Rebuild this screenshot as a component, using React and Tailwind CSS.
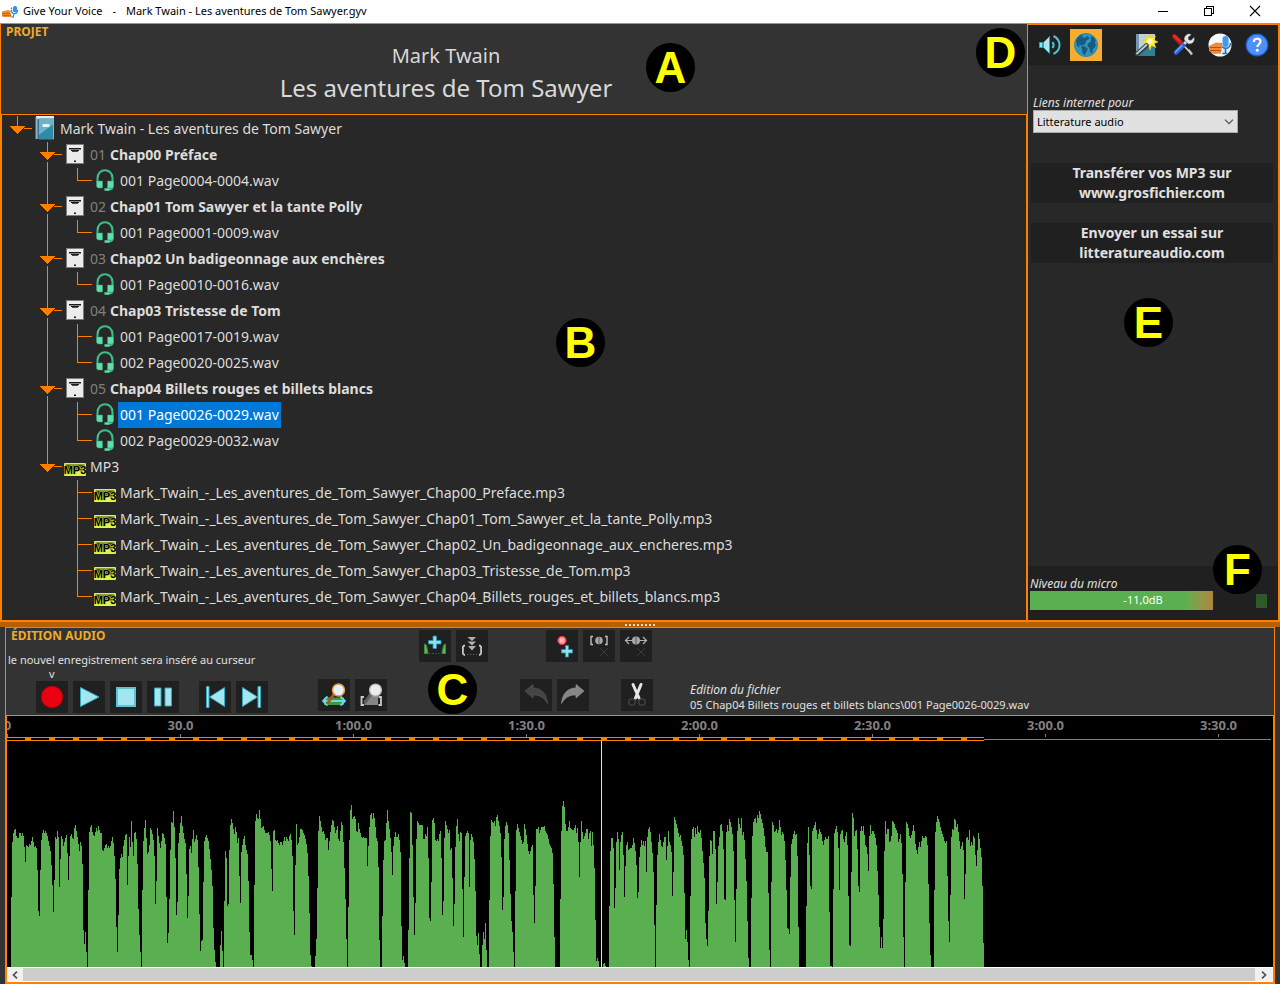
import React from "react";

const EMPTY = 531;

const WAVE_PARTS = [
  {
    shift: "translate(0 0)",
    points:
      "34,531 34,357 37,160 40,132 46,112 50,140 55,146 58,128 62,128 65,140 69,122 73,160 76,228 79,166 85,172 89,160 92,165 98,140 103,172 109,165 112,215 115,353 118,404 121,258 124,155 127,130 131,120 134,132 137,122 143,140 148,165 152,185 157,265 160,383 163,297 166,138 169,150 175,105 178,308 184,138 187,143 190,170 194,153 201,132 205,282 208,212 211,140 214,130 217,143 220,152 223,115 226,102 229,120 235,155 238,188 241,153 245,170 248,232 250,407 253,473 256,415 259,475 262,531 264,531 265,337 268,130 274,100 278,130 283,140 287,125 289,110 292,125 296,106 300,128 305,130 307,178 310,186 315,168 320,163 323,175 326,165 330,178 334,155 338,138 342,170 346,242 349,390 352,503 355,405 358,245 361,205 365,190 367,207 371,165 376,135 380,132 382,299 388,130 391,190 394,82 398,165 400,210 404,118 409,135 412,195 415,342 419,447 422,492 424,531 427,531 427,333 430,160 436,82 440,150 443,200 448,175 451,112 457,128 463,165 466,347 469,310 472,108 477,150 482,175 487,130 492,135 497,165 500,347 502,461 505,445 508,357 511,200 514,95 517,108 520,55 523,98 526,165 529,375 532,375 535,165 541,105 544,73 547,105 552,140 558,165 562,392 565,347 568,180 571,160 574,195 580,112 584,160 590,132 594,160 598,347 601,491 604,447 607,482 610,305 613,155 619,132 626,155 631,200 637,265 640,402 643,475 648,531 659,531 661,475 664,411 667,472 670,531 671,531 673,365 676,185 679,172 682,350 686,342 688,195 691,108 694,85 698,100 703,136 708,102 712,165 715,124 718,232 721,372 724,190 730,150 733,133 737,168 743,195 746,288 749,450 752,503 755,492 758,515 760,531 763,531 763,327 766,95 770,70 775,95 778,55 782,90 785,118 790,106 795,128 802,130 807,125 812,155 814,215 817,341 820,125 823,115 827,155 833,148 838,168 843,152 848,165 853,140 857,155 860,138 865,155 871,127 877,168 880,340 883,476 886,255 889,90 893,175 898,145 902,112 908,122 915,140 920,165 924,205 926,275 929,385 932,515 935,531 945,531 947,490 950,440 952,325 956,95 959,75 963,105 968,127 972,120 976,152 982,138 986,185 990,135 997,88 1001,93 1006,130 1010,118 1013,105 1015,145 1018,160 1024,95 1028,106 1031,165 1034,245 1037,340 1040,465 1042,531 1045,531 1045,390 1048,168 1051,65 1054,37 1057,88 1063,75 1067,88 1071,145 1075,95 1080,125 1086,145 1092,140 1096,148 1099,122 1102,238 1105,180 1110,80 1115,67 1118,90 1121,65 1125,95 1130,150 1133,155 1136,245 1138,435 1141,531 1145,531 1147,411 1150,222 1153,152 1157,150 1160,90 1162,52 1165,90 1170,130 1174,165 1177,270 1181,155 1187,122 1191,150 1195,128 1200,160 1203,212 1204,385 1207,515 1210,495 1213,515 1215,531",
  },
  {
    shift: "translate(1200 0)",
    points:
      "24,531 25,462 28,235 31,67 34,55 37,140 40,293 43,448 46,378 49,160 52,93 57,103 64,108 67,97 70,145 73,152 76,127 79,147 82,100 85,165 88,378 91,410 94,316 97,92 100,82 104,100 106,150 109,153 112,145 115,158 121,112 124,168 127,377 130,370 133,155 136,92 142,115 146,130 148,106 151,183 154,160 157,230 160,413 163,377 166,183 169,115 172,79 175,128 179,155 181,130 184,103 187,258 190,473 193,288 196,140 202,122 206,130 208,320 211,155 214,130 220,150 223,192 226,276 229,430 232,476 235,420 238,476 240,531 247,531 247,476 250,420 253,460 256,385 259,460 261,531 267,531 268,370 271,148 274,88 280,102 283,88 286,115 289,85 292,70 295,92 301,120 304,165 307,359 310,357 313,155 316,112 319,94 324,108 327,150 330,265 334,387 337,414 340,475 343,531 345,531 346,342 349,125 352,99 357,120 362,140 367,162 371,155 373,99 379,130 384,175 388,195 391,185 395,168 398,163 400,292 403,417 406,324 409,116 412,118 415,108 418,130 424,112 430,112 433,106 437,124 443,136 448,160 454,172 458,190 461,300 464,465 466,531 480,531 481,370 484,138 487,52 490,30 493,42 496,97 499,124 504,122 508,90 511,112 517,120 522,118 527,105 529,132 533,112 535,130 538,282 541,172 544,88 547,120 550,147 556,132 562,108 565,152 571,112 574,177 577,120 580,155 583,205 586,363 589,515 592,501 596,516 598,531 609,531 610,525 613,516 618,531 627,531 628,384 631,190 634,145 638,145 641,180 643,360 646,324 649,163 652,128 655,124 658,258 661,160 667,118 670,165 673,338 676,240 679,168 682,151 685,180 690,175 697,172 700,142 703,155 709,205 712,324 715,330 718,205 724,148 728,168 731,150 734,170 736,127 739,268 742,148 745,118 748,109 752,127 757,185 760,215 763,378 766,531 768,531 769,375 772,200 778,127 781,148 786,178 790,157 796,130 800,220 805,117 808,152 811,168 814,155 817,328 820,282 823,79 828,95 834,120 838,142 841,132 845,155 850,178 853,276 856,453 859,414 862,447 865,504 868,531 870,531 871,353 874,153 877,120 880,105 884,145 887,108 890,135 893,105 896,130 900,128 900,531",
  },
  {
    shift: "translate(2100 0)",
    points:
      "0,531 0,112 3,125 7,175 10,215 13,237 16,390 19,437 22,486 25,396 28,207 31,151 35,153 38,200 41,109 46,138 49,350 52,300 55,172 58,150 61,105 64,99 67,118 70,145 73,327 77,330 79,130 83,103 86,125 88,85 92,97 97,125 100,160 103,297 106,482 109,336 112,130 115,82 118,97 121,124 124,73 127,137 130,122 133,140 136,198 139,252 142,370 145,500 148,531 152,531 154,363 157,148 160,97 166,79 169,105 172,73 175,88 178,61 182,75 187,97 192,120 196,165 199,190 202,165 205,276 208,460 210,531 212,531 214,316 217,94 222,110 224,132 229,115 232,130 236,120 238,85 241,105 244,138 248,124 253,142 256,198 259,273 262,414 265,408 268,464 271,282 274,165 279,138 283,122 286,136 289,124 292,162 295,366 297,531 318,531 319,387 322,172 325,97 328,180 331,276 334,336 337,124 343,109 346,91 349,112 352,150 358,117 364,130 370,168 376,140 381,150 386,136 388,330 391,528 400,531 400,333 403,130 409,106 415,138 418,336 421,132 427,115 430,147 434,157 439,122 442,138 445,288 448,456 451,510 454,285 457,70 460,73 463,142 469,112 472,155 475,276 478,345 481,128 484,103 487,128 490,103 493,130 497,168 502,175 505,264 508,148 511,97 514,135 518,120 522,125 527,145 530,168 532,232 535,300 538,396 541,482 544,432 547,482 550,430 553,205 556,82 559,137 562,117 565,109 568,158 574,150 577,91 583,100 588,120 592,122 595,156 600,145 603,122 607,220 610,408 612,531 614,531 616,316 619,94 625,108 630,150 637,127 640,103 643,115 646,160 652,195 658,153 661,174 667,138 672,147 677,138 681,142 683,172 685,261 688,381 691,482 693,531 701,531 703,336 706,132 709,100 712,76 718,95 724,122 730,140 736,160 740,153 742,235 745,373 748,480 751,353 754,148 757,115 760,125 763,88 766,85 769,112 772,99 776,130 781,178 785,165 790,145 793,338 796,276 799,145 803,142 805,160 808,109 811,170 814,153 817,170 820,138 823,136 826,187 829,237 832,190 835,127 838,142 841,172 844,187 847,258 850,432 852,531",
  },
];

/* ---------- Icons ---------- */

const AppLogo = () => (
  <svg viewBox="0 0 16 12" className="h-3 w-4" aria-hidden="true">
    <path d="M0 5.500 6 4l3 1-1 2h1v4H1l-1-1z" fill="#f08a2c" />
    <path d="M0 7.500h8M1 9.500h8" stroke="#b65a14" strokeWidth=".8" />
    <rect x="11" y="0" width="4" height="6.500" rx="1.800" fill="#2b93e8" />
    <path d="M9.500 4c0 5 6 5 6 0M12 8l-1 3M9 11h3M9.500 1.500v2" stroke="#1e8ce8" strokeWidth="1.200" fill="none" />
  </svg>
);

const Speaker = () => (
  <svg viewBox="0 0 24 24" className="size-6" aria-hidden="true">
    <path d="M2.500 9.500h3v5h-3z" fill="#8fe3ef" stroke="#2aa5b8" />
    <path d="M6.500 9.500 12.500 3.500v17l-6-6z" fill="#a5e8f2" stroke="#2aa5b8" />
    <path d="M15.500 9c1.500 2 1.500 4 0 6" fill="none" stroke="#4cc4d6" strokeWidth="2" />
    <path d="M16.500 3c8 4 8 14 0 18" fill="none" stroke="#4cc4d6" strokeWidth="2" />
  </svg>
);

const Globe = () => (
  <svg viewBox="0 0 26 26" className="size-[26px]" aria-hidden="true">
    <circle cx="13" cy="13" r="11.500" fill="#2c96bd" />
    <path d="M3 8c1-3 4-5.500 7-6l-1 3 3 1 2-2 3 2-4 3-1 3-3 1.500-3-1 1 3-3-1.500z" fill="#1b5a80" />
    <path d="M8 14l4 .5 3 2.500-1.500 2.500-2 4-2-2.500-.5-3.500z" fill="#1b5a80" />
    <path d="M18 4.500l2.500.5 2.500 4-1.500 1 1.500 3-1.500 3-1.500 1-.5 3.500-2 .5-1-5-2-1.500.5-3 3-2z" fill="#1b5a80" />
    <circle cx="13" cy="13" r="11.500" fill="none" stroke="#2a86a8" />
  </svg>
);

const Wizard = () => (
  <svg viewBox="0 0 24 24" className="size-6" aria-hidden="true">
    <path d="M4 1h17v22H4z" fill="#2f7f97" />
    <path d="M4 1h17v6L6 20H4z" fill="#b9d2dc" />
    <path d="M2 1h3v22H2z" fill="#7396aa" />
    <path d="M16 1l1.500 4 4-2-1.500 4 4 2-4 1.500 2 4-4.500-2L16 17l-1.500-4.500-4.500 1.500 2-4-3.500-2 4-1L11 3l4 2z" fill="#ffef3a" stroke="#f5c411" strokeWidth=".6" />
    <circle cx="16" cy="8.500" r="2.500" fill="#fffde0" />
    <path d="M3 21 12.500 12.500" stroke="#333a40" strokeWidth="4.500" strokeLinecap="round" />
    <path d="M3 20.500 12.500 12" stroke="#bcc8ce" strokeWidth="2" strokeLinecap="round" />
  </svg>
);

const Tools = () => (
  <svg viewBox="0 0 24 24" className="size-6" aria-hidden="true">
    <path d="M9 9 18 18" stroke="#dfe3e6" strokeWidth="1.600" />
    <path d="M17.500 17l3.500 4.500" stroke="#c2c8cc" strokeWidth="2.500" />
    <path d="M3.500 3.500l6 6" stroke="#d01818" strokeWidth="4.600" strokeLinecap="round" />
    <path d="M3 2.500l5.500 5.500" stroke="#f05a5a" strokeWidth="1" strokeLinecap="round" />
    <path d="M16 9.500 13.500 7c-.5-4 3-7 6.500-5.500l-3 3 .5 2.500 2.500.5 3-3c1 4-2 7-6 6z" fill="#e3e7ea" stroke="#9ea6ab" strokeWidth=".5" />
    <path d="M15 9 12 12" stroke="#d5dadd" strokeWidth="3" />
    <path d="M12 12.500 5 19.500" stroke="#2a62d8" strokeWidth="4.600" strokeLinecap="round" />
    <path d="M11 12.500 4.500 19" stroke="#7da6ff" strokeWidth="1.200" strokeLinecap="round" />
  </svg>
);

const Contribute = () => (
  <svg viewBox="0 0 24 24" className="size-6" aria-hidden="true">
    <circle cx="12" cy="12" r="11.500" fill="#f7fafc" />
    <path d="M17 2.500a11.500 11.500 0 0 1-3 20z" fill="#cfe4f5" />
    <rect x="14.500" y="3" width="6" height="11" rx="3" fill="#3f9bea" />
    <path d="M13 10c0 7 9.500 7 9.500 0M17.500 15v5M14.500 20.500h5" stroke="#2470b4" strokeWidth="1.500" fill="none" />
    <path d="M1 13l7-3.500 5 .5 1 2v2l-1 6.500-7 .5-5-3z" fill="#f08a38" />
    <path d="M2 14.500h11M2 17.500h11" stroke="#b5530f" strokeWidth="1.200" />
  </svg>
);

const Help = () => (
  <svg viewBox="0 0 24 24" className="size-6" aria-hidden="true">
    <circle cx="12" cy="12" r="10.800" fill="#4d90fa" stroke="#1f5fd0" strokeWidth="1.200" />
    <path d="M8.800 9c0-4.300 6.700-4.300 6.700-.4 0 2.700-3.200 2.600-3.200 5.400" fill="none" stroke="#fff" strokeWidth="2.200" />
    <circle cx="12.200" cy="17.300" r="1.500" fill="#fff" />
  </svg>
);

const BookIcon = () => (
  <svg viewBox="0 0 20 24" className="h-6 w-5" aria-hidden="true">
    <path d="M0 1h5v22H0z" fill="#3c6f8e" />
    <path d="M1 0h18v3H1z" fill="#dfe9ef" />
    <path d="M4 2.500h15v21H4z" fill="#2d8ca6" />
    <path d="M4 2.500h15v5L4 19z" fill="#6db3c6" />
    <path d="M1 1.500h1.500V23H1zM18 2h1v21h-1z" fill="#8fb3c9" />
    <path d="M7.500 8h7v3h-7z" fill="#e4f3f7" />
  </svg>
);

const ChapterIcon = () => (
  <svg viewBox="0 0 18 20" className="h-5 w-[18px]" aria-hidden="true">
    <path d="M0 0h18v20H0z" fill="#7c7c7c" />
    <path d="M1 1h16v18H1z" fill="#ececec" />
    <path d="M3 4h12v1.500H3zM5 6h8v1H5zM6 7.300h6v.7H6zM8 16.500h2V18H8z" fill="#1a1a1a" />
  </svg>
);

const Headphones = () => (
  <svg viewBox="0 0 18 22" className="h-[22px] w-[18px]" aria-hidden="true">
    <path d="M1.500 13V9.500C1.500-1.500 16.500-1.500 16.500 9.500V18c0 2-1 2.500-5 2.500" fill="none" stroke="#3cc08a" strokeWidth="2" />
    <path d="M.5 12h6v7H3C1 19 .5 18 .5 16.500zM11.500 12h6v5c0 1.500-.5 2-2.500 2h-3.500z" fill="#5fe0aa" stroke="#2f9f74" strokeWidth=".5" />
    <path d="M8.500 19.300h5v2.400h-5z" fill="#5fe0aa" />
  </svg>
);

const Mp3Icon = () => (
  <svg viewBox="0 0 22 13" className="mt-1.5 h-[13px] w-[22px]" aria-hidden="true">
    <rect width="22" height="13" rx="1" fill="#dcf54a" />
    <rect x="1.500" y="1.500" width="19" height="6" fill="#3c4512" />
    <text
      x="11"
      y="11"
      textAnchor="middle"
      fill="#000"
      stroke="#c8e03c"
      strokeWidth="1"
      paintOrder="stroke"
      className="font-['Liberation_Sans_Narrow','Liberation_Sans',sans-serif] text-[11px] font-bold"
    >
      MP3
    </text>
  </svg>
);

/* ---------- Tree ---------- */

function Guide({ kind }) {
  return (
    <svg viewBox="0 0 30 26" className="h-[26px] w-[30px] shrink-0" shapeRendering="crispEdges" fill="#ff8000" aria-hidden="true">
      {kind === "open" && (
        <>
          <path d="M15 0h1v10h-1zM22 12h8v1h-8z" />
          <path d="M8 10h15l-7.500 8z" />
        </>
      )}
      {kind === "openMid" && (
        <>
          <path d="M15 0h1v10h-1zM15 20h1v6h-1zM22 12h8v1h-8z" />
          <path d="M8 10h15l-7.500 8z" />
        </>
      )}
      {kind === "line" && <path d="M15 0h1v26h-1z" />}
      {kind === "mid" && <path d="M15 0h1v26h-1zM15 12h15v1H15z" />}
      {kind === "last" && <path d="M15 0h1v13h-1zM15 12h15v1H15z" />}
    </svg>
  );
}

const ROWS = [
  { guides: ["open"], icon: "book", text: "Mark Twain - Les aventures de Tom Sawyer" },
  { guides: ["none", "openMid"], icon: "chapter", num: "01", text: "Chap00 Préface" },
  { guides: ["none", "line", "last"], icon: "wav", text: "001 Page0004-0004.wav" },
  { guides: ["none", "openMid"], icon: "chapter", num: "02", text: "Chap01 Tom Sawyer et la tante Polly" },
  { guides: ["none", "line", "last"], icon: "wav", text: "001 Page0001-0009.wav" },
  { guides: ["none", "openMid"], icon: "chapter", num: "03", text: "Chap02 Un badigeonnage aux enchères" },
  { guides: ["none", "line", "last"], icon: "wav", text: "001 Page0010-0016.wav" },
  { guides: ["none", "openMid"], icon: "chapter", num: "04", text: "Chap03 Tristesse de Tom" },
  { guides: ["none", "line", "mid"], icon: "wav", text: "001 Page0017-0019.wav" },
  { guides: ["none", "line", "last"], icon: "wav", text: "002 Page0020-0025.wav" },
  { guides: ["none", "openMid"], icon: "chapter", num: "05", text: "Chap04 Billets rouges et billets blancs" },
  { guides: ["none", "line", "mid"], icon: "wav", text: "001 Page0026-0029.wav", selected: true },
  { guides: ["none", "line", "last"], icon: "wav", text: "002 Page0029-0032.wav" },
  { guides: ["none", "open"], icon: "mp3", text: "MP3" },
  { guides: ["none", "none", "mid"], icon: "mp3", text: "Mark_Twain_-_Les_aventures_de_Tom_Sawyer_Chap00_Preface.mp3" },
  { guides: ["none", "none", "mid"], icon: "mp3", text: "Mark_Twain_-_Les_aventures_de_Tom_Sawyer_Chap01_Tom_Sawyer_et_la_tante_Polly.mp3" },
  { guides: ["none", "none", "mid"], icon: "mp3", text: "Mark_Twain_-_Les_aventures_de_Tom_Sawyer_Chap02_Un_badigeonnage_aux_encheres.mp3" },
  { guides: ["none", "none", "mid"], icon: "mp3", text: "Mark_Twain_-_Les_aventures_de_Tom_Sawyer_Chap03_Tristesse_de_Tom.mp3" },
  { guides: ["none", "none", "last"], icon: "mp3", text: "Mark_Twain_-_Les_aventures_de_Tom_Sawyer_Chap04_Billets_rouges_et_billets_blancs.mp3" },
];

const ROW_ICONS = { book: BookIcon, chapter: ChapterIcon, wav: Headphones, mp3: Mp3Icon };

function TreeRow({ row }) {
  const Icon = ROW_ICONS[row.icon];
  return (
    <li
      role="treeitem"
      aria-level={row.guides.length}
      aria-selected={Boolean(row.selected)}
      className="flex h-[26px] items-center whitespace-nowrap text-sm text-[#dcdcdc]"
    >
      {row.guides.map((kind, i) => (
        <Guide key={i} kind={kind} />
      ))}
      <span className="flex w-[26px] shrink-0 items-center justify-center pb-0.5">
        <Icon />
      </span>
      <span className={row.selected ? "flex h-[26px] items-center bg-[#0078d7] px-0.5 text-white" : "flex items-center gap-1 px-0.5"}>
        {row.num && <span className="text-[#808080]">{row.num}</span>}
        <span className={row.num ? "font-bold" : ""}>{row.text}</span>
      </span>
    </li>
  );
}

/* ---------- Small parts ---------- */

function Marker({ letter, className }) {
  return (
    <span
      className={`absolute flex size-[49px] items-center justify-center rounded-full bg-black font-['Liberation_Sans',sans-serif] text-[44px] leading-none font-bold text-[#ffff00] ${className}`}
    >
      {letter}
    </span>
  );
}

function ToolButton({ label, children }) {
  return (
    <button type="button" aria-label={label} className="flex size-8 shrink-0 items-center justify-center bg-[#202020]">
      <svg viewBox="0 0 32 32" className="size-8" aria-hidden="true">
        {children}
      </svg>
    </button>
  );
}

function PanelButton({ label, active, children }) {
  return (
    <button
      type="button"
      aria-label={label}
      className={active ? "flex size-8 shrink-0 items-center justify-center bg-[#f5ae30]" : "flex size-8 shrink-0 items-center justify-center"}
    >
      {children}
    </button>
  );
}

/* ---------- Sections ---------- */

function TitleBar() {
  return (
    <header className="flex h-[23px] items-center bg-white pl-0.5 text-black">
      <AppLogo />
      <h1 className="ml-[5px] flex gap-2.5 text-[11px]">
        <span>Give Your Voice</span>
        <span>-</span>
        <span>Mark Twain - Les aventures de Tom Sawyer.gyv</span>
      </h1>
      <div className="ml-auto flex items-center gap-[34px] pr-[19px] pb-0.5">
        <button type="button" aria-label="Réduire">
          <svg viewBox="0 0 12 12" className="size-3" shapeRendering="crispEdges"><path d="M1 6h10v1H1z" /></svg>
        </button>
        <button type="button" aria-label="Restaurer">
          <svg viewBox="0 0 12 12" className="size-3" shapeRendering="crispEdges">
            <path d="M1.500 3.500h7v7h-7zM3.500 3.500v-2h7v7h-2" fill="none" stroke="#000" />
          </svg>
        </button>
        <button type="button" aria-label="Fermer">
          <svg viewBox="0 0 12 12" className="size-3"><path d="M1 1l10 10M11 1 1 11" stroke="#000" strokeWidth="1.100" /></svg>
        </button>
      </div>
    </header>
  );
}

function ProjectPanel() {
  return (
    <section className="relative flex min-w-0 flex-1 flex-col">
      <div className="relative h-[91px] border-t border-l border-[#ff8000] bg-[#333333]">
        <h2 className="pl-[5px] text-[12px] leading-4 font-bold text-[#f0aa28]">PROJET</h2>
        <div className="flex flex-col items-center pr-[136px] text-[#d8d8d8]">
          <p className="text-[20px] leading-8">Mark Twain</p>
          <p className="text-[24px] leading-8">Les aventures de Tom Sawyer</p>
        </div>
        <Marker letter="A" className="top-[19px] left-[645px]" />
        <Marker letter="D" className="top-1 right-0.5" />
      </div>
      <div className="flex-1 border border-b-2 border-l-2 border-[#ff8000] bg-[#282828] pb-2.5">
        <ul role="tree" aria-label="Projet" className="pt-px">
          {ROWS.map((row) => (
            <TreeRow key={row.text} row={row} />
          ))}
        </ul>
      </div>
      <Marker letter="B" className="top-[295px] left-[556px]" />
    </section>
  );
}

function SidePanel() {
  return (
    <aside className="relative flex w-[253px] shrink-0 flex-col border-2 border-l border-[#ff8000] bg-[#282828] text-[#e0e0e0]">
      <nav aria-label="Outils" className="flex h-10 items-center bg-[#202020] pl-[5px]">
        <PanelButton label="Son"><Speaker /></PanelButton>
        <span className="w-[5px]" />
        <PanelButton label="Liens internet" active><Globe /></PanelButton>
        <span className="w-7" />
        <div className="flex gap-[5px]">
          <PanelButton label="Assistant"><Wizard /></PanelButton>
          <PanelButton label="Paramètres"><Tools /></PanelButton>
          <PanelButton label="Contribuer"><Contribute /></PanelButton>
          <PanelButton label="Aide"><Help /></PanelButton>
        </div>
      </nav>
      <div className="flex-1 px-[5px] pt-[30px]">
        <label htmlFor="site" className="block text-[12px] leading-[15px] italic">Liens internet pour</label>
        <div className="relative w-[205px]">
          <select
            id="site"
            defaultValue="la"
            className="block h-[23px] w-full appearance-none border border-[#a8a8a8] bg-[#e1e1e1] px-[3px] text-[11px] leading-5 text-black"
          >
            <option value="la">Litterature audio</option>
          </select>
          <svg viewBox="0 0 10 6" className="pointer-events-none absolute top-[9px] right-1 h-1.5 w-2.5" aria-hidden="true">
            <path d="M1 .7l4 4 4-4" fill="none" stroke="#505050" strokeWidth="1.200" />
          </svg>
        </div>
        <div className="-ml-0.5 flex flex-col gap-5 pt-[30px]">
          <button type="button" className="bg-[#202020] text-sm leading-5 font-bold">
            Transférer vos MP3 sur<br />www.grosfichier.com
          </button>
          <button type="button" className="bg-[#202020] text-sm leading-5 font-bold">
            Envoyer un essai sur<br />litteratureaudio.com
          </button>
        </div>
      </div>
      <div className="h-[54px] bg-[#202020] pt-[10px] pl-0.5">
        <p className="text-[12px] leading-[15px] italic">Niveau du micro</p>
        <div className="flex items-center justify-between pr-[11px]">
          <div className="relative w-[226px]">
            <div className="h-[19px] w-[183px] bg-linear-to-r from-[#5aaf50] from-85% to-[#ad8440]" />
            <span className="absolute inset-0 flex items-center justify-center text-[11px] text-white">-11,0dB</span>
          </div>
          <span className="absolute right-[11px] h-[14px] w-[11px] bg-[#2d5a28]" />
        </div>
      </div>
      <Marker letter="E" className="top-[273px] left-24" />
      <Marker letter="F" className="right-4 bottom-[26px]" />
    </aside>
  );
}

function Transport() {
  return (
    <div className="flex items-center gap-[5px] pl-7">
      <ToolButton label="Enregistrer">
        <circle cx="16" cy="16" r="10.800" fill="#ea0012" stroke="#a8000c" />
      </ToolButton>
      <ToolButton label="Lecture">
        <path d="M7.500 6.500 26 16 7.500 25.500z" fill="#a4e6f0" stroke="#38a8bc" />
      </ToolButton>
      <ToolButton label="Arrêt">
        <path d="M7 7h18v18H7z" fill="#a4e6f0" stroke="#5cc4d4" strokeWidth="2" />
      </ToolButton>
      <ToolButton label="Pause">
        <path d="M7.500 7h6.500v18H7.500zM18 7h6.500v18H18z" fill="#a4e6f0" stroke="#38a8bc" />
      </ToolButton>
      <span className="w-2.5" />
      <ToolButton label="Début">
        <path d="M7.500 5.500h2.500v21H7.500zM25.500 6.500v19L10.500 16z" fill="#a4e6f0" stroke="#38a8bc" />
      </ToolButton>
      <ToolButton label="Fin">
        <path d="M22 5.500h2.500v21H22zM6.500 6.500v19L21.500 16z" fill="#a4e6f0" stroke="#38a8bc" />
      </ToolButton>
    </div>
  );
}

function EditTools() {
  return (
    <div className="flex flex-col gap-[17px] pt-0.5">
      <div className="flex gap-[5px] pl-[101px]">
        <ToolButton label="Insérer un silence">
          <path d="M5.500 23.500V14l2 1.500 1.500 8zM26.500 23.500V14l-2 1.500-1.500 8z" fill="#5fb854" stroke="#3f8f38" />
          <path d="M10 23.500h12" stroke="#2f6a2a" strokeDasharray="1.500 1.500" />
          <path d="M14 6h3.500v4.500H22V14h-4.500v4.500H14V14H9.500v-3.500H14z" fill="#8adff0" stroke="#2c8fa6" strokeWidth=".8" />
        </ToolButton>
        <ToolButton label="Coller dans la sélection">
          <path d="M9 15.500c-3 0-2 3-2 4.500s-1 5 2 5M23 15.500c3 0 2 3 2 4.500s1 5-2 5" fill="none" stroke="#c8c8c8" strokeWidth="1.800" />
          <path d="M11 24.500h10" stroke="#5a5a5a" strokeDasharray="1.500 1.500" />
          <path d="M11.500 7h8.500L16 11zM11.500 11.500h8.500L16 15.500zM12 16h8l-4 4.500z" fill="#b0b0b0" />
        </ToolButton>
        <span className="w-12" />
        <ToolButton label="Ajouter un repère">
          <circle cx="16" cy="10.500" r="4.200" fill="#ff8080" stroke="#d83040" />
          <path d="M15 8.500v4M17 8.500v4" stroke="#fff" strokeWidth=".9" />
          <path d="M19.500 15.500h3v4h4V23h-4v4h-3v-4h-4v-3.500h4z" fill="#8adff0" stroke="#2c8fa6" strokeWidth=".8" />
        </ToolButton>
        <ToolButton label="Supprimer les repères de la sélection">
          <path d="M10 6.500H8v8h2M22 6.500h2v8h-2" fill="none" stroke="#c8c8c8" strokeWidth="1.300" />
          <circle cx="16" cy="10.500" r="3.800" fill="#a8a8a8" />
          <path d="M16 7v7" stroke="#555" />
          <path d="M17 18l8 8M25 18l-8 8" stroke="#3c3c3c" />
        </ToolButton>
        <ToolButton label="Supprimer tous les repères">
          <path d="M5.500 10.500h21M9 7l-3.500 3.500L9 14M23 7l3.500 3.500L23 14" fill="none" stroke="#b0b0b0" strokeWidth="1.200" />
          <circle cx="16" cy="10.500" r="4" fill="#a8a8a8" />
          <path d="M16 7v7" stroke="#555" />
          <path d="M17 18l8 8M25 18l-8 8" stroke="#3c3c3c" />
        </ToolButton>
      </div>
      <div className="flex gap-[5px]">
        <ToolButton label="Zoom global">
          <path d="M6 18.500h20v7.500H6z" fill="#3f9a3c" />
          <path d="M9.500 17.500 5 22l4.500 4.500M22.500 17.500 27 22l-4.500 4.500M6 22h20" fill="none" stroke="#6cd6ea" strokeWidth="1.800" />
          <path d="M16.500 14.500 9 25" stroke="#a85820" strokeWidth="3" />
          <circle cx="20.500" cy="11" r="6" fill="#e6f1ff" stroke="#e89a3a" strokeWidth="1.500" />
        </ToolButton>
        <ToolButton label="Zoom sur la sélection">
          <path d="M9.500 22 14 17h9v9H9.500z" fill="#858585" />
          <path d="M9 18H6.500v8H9M23.500 18H26v8h-2.500" fill="none" stroke="#c8c8c8" strokeWidth="1.800" />
          <path d="M16.500 14.500 9.500 24" stroke="#606060" strokeWidth="3" />
          <circle cx="20.500" cy="11" r="6" fill="#ececec" stroke="#b8b8b8" strokeWidth="1.200" />
        </ToolButton>
        <span className="w-[123px]" />
        <ToolButton label="Annuler">
          <path d="M5 12 13 5.500v3.500c8 0 13.500 5 14.500 15.500-3.500-6-7.500-8.500-14.500-8.500v3z" fill="#454545" stroke="#5a5a5a" strokeWidth=".6" />
        </ToolButton>
        <ToolButton label="Rétablir">
          <path d="M27 12 19 5.500V9C11 9 5.500 14 4.500 24.500 8 18.500 12 16 19 16v3z" fill="#868686" stroke="#9a9a9a" strokeWidth=".6" />
        </ToolButton>
        <span className="w-[22px]" />
        <ToolButton label="Couper">
          <path d="M12 5.500 18 19M20 5.500 14.500 19" stroke="#e8e8e8" strokeWidth="3" strokeLinecap="round" />
          <circle cx="11" cy="23" r="3.200" fill="none" stroke="#454545" strokeWidth="1.300" />
          <circle cx="21" cy="23" r="3.200" fill="none" stroke="#454545" strokeWidth="1.300" />
        </ToolButton>
      </div>
    </div>
  );
}

const TIMES = ["0", "30.0", "1:00.0", "1:30.0", "2:00.0", "2:30.0", "3:00.0", "3:30.0"];

function Timeline() {
  return (
    <div className="flex min-h-[240px] flex-1 flex-col border-2 border-t border-[#ff8000] bg-black">
      <div className="flex h-[21px] shrink-0 overflow-hidden">
        {TIMES.map((t, i) => (
          <div
            key={t}
            className={`flex w-[173px] shrink-0 flex-col items-center justify-between text-[13px] leading-[18px] font-bold text-[#808080] ${i === 0 ? "-ml-[86px]" : ""}`}
          >
            {t}
            <span className="h-[3px] w-px bg-[#808080]" />
          </div>
        ))}
      </div>
      <div className="flex h-1 shrink-0 items-center overflow-hidden">
        <svg viewBox="0 0 977 4" className="h-1 w-[977px] shrink-0" shapeRendering="crispEdges" aria-hidden="true">
          <path d="M0 .5h977M0 3.500h977" stroke="#ff8000" />
          <path d="M18 2h959" stroke="#ff8000" strokeWidth="2" strokeDasharray="6 18" />
        </svg>
        <span className="mr-0.5 h-px flex-1 bg-[#808080]" />
      </div>
      <div className="flex flex-1 overflow-hidden">
        <svg
          viewBox="21 -147 3798 678"
          preserveAspectRatio="none"
          className="w-[1266px] shrink-0"
          shapeRendering="crispEdges"
          role="img"
          aria-label="Forme d'onde"
        >
          {WAVE_PARTS.map((part) => (
            <polygon key={part.shift} transform={part.shift} points={part.points} fill="#5aaf50" />
          ))}
          <path d={`M1803 -147h3V${EMPTY}h-3z`} fill="#ffff00" />
        </svg>
      </div>
      <div className="flex h-[15px] shrink-0 border-y border-white bg-[#cdcdcd]">
        <button type="button" aria-label="Défiler à gauche" className="flex w-4 items-center justify-center bg-[#f0f0f0]">
          <svg viewBox="0 0 6 8" className="h-2 w-1.5"><path d="M5 .7 1.500 4 5 7.300" fill="none" stroke="#505050" strokeWidth="1.700" /></svg>
        </button>
        <div className="flex-1" />
        <button type="button" aria-label="Défiler à droite" className="flex w-[18px] items-center justify-center bg-[#f0f0f0]">
          <svg viewBox="0 0 6 8" className="h-2 w-1.5"><path d="M1 .7 4.500 4 1 7.300" fill="none" stroke="#505050" strokeWidth="1.700" /></svg>
        </button>
      </div>
    </div>
  );
}

function AudioEditor() {
  return (
    <section className="flex flex-1 flex-col bg-[#333333] pr-[5px] pl-[5px]">
      <div className="relative flex h-[88px] shrink-0 border-x border-t border-[#ff8000] text-[#e0e0e0]">
        <div className="w-[312px] shrink-0 pl-0.5">
          <h2 className="pl-[3px] text-[12px] leading-4 font-bold text-[#f0aa28]">ÉDITION AUDIO</h2>
          <p className="pt-2 text-[11px] leading-4">le nouvel enregistrement sera inséré au curseur</p>
          <p className="pb-0.5 pl-[41px] text-[11px] leading-[11px]">v</p>
          <Transport />
        </div>
        <EditTools />
        <div className="pt-[54px] pl-[37px] text-[11px] leading-[15px] whitespace-nowrap">
          <p className="text-[12px] leading-[15px] italic">Edition du fichier</p>
          <p>05 Chap04 Billets rouges et billets blancs\001 Page0026-0029.wav</p>
        </div>
        <Marker letter="C" className="top-[37px] left-[422px]" />
      </div>
      <Timeline />
    </section>
  );
}

export default function App() {
  return (
    <div className="flex min-h-screen flex-col bg-[#333333] font-['Noto_Sans','Open_Sans',sans-serif]">
      <TitleBar />
      <main className="flex flex-1 flex-col">
        <div className="flex">
          <ProjectPanel />
          <SidePanel />
        </div>
        <div role="separator" className="flex h-[5px] items-start justify-center gap-0.5 bg-[#b85f00] pt-0.5">
          {[0, 1, 2, 3, 4, 5, 6, 7].map((n) => (
            <span key={n} className="size-0.5 bg-[#f3dcc0]" />
          ))}
        </div>
        <AudioEditor />
      </main>
    </div>
  );
}
